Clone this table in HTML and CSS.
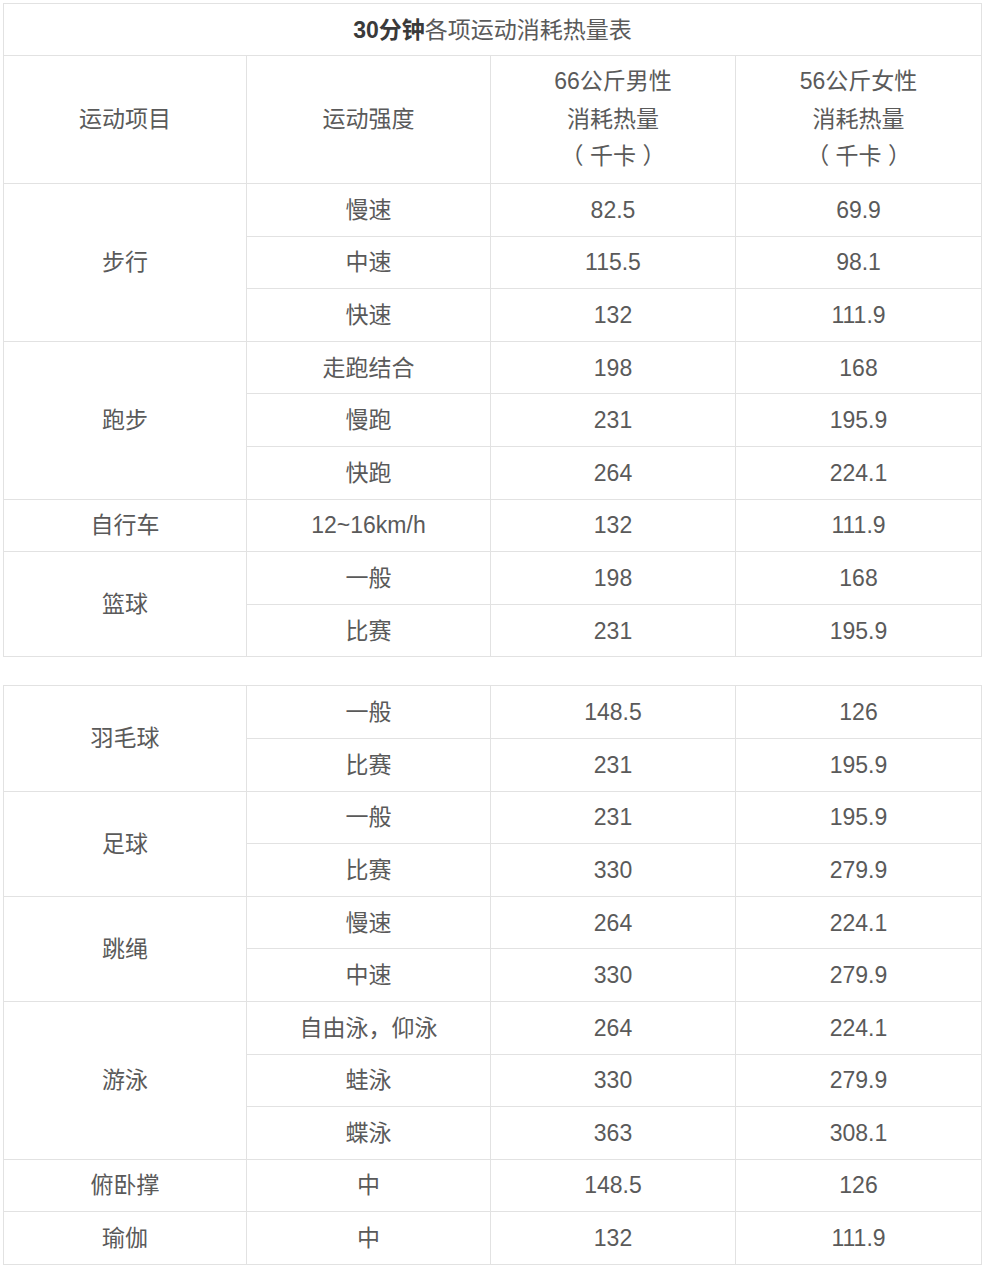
FILE: index.html
```html
<!DOCTYPE html>
<html lang="zh-CN">
<head>
<meta charset="utf-8">
<title>30分钟各项运动消耗热量表</title>
<link rel="stylesheet" href="styles.css">
</head>
<body>
<div class="page">
  <table class="cal">
    <colgroup><col class="c1"><col class="c2"><col class="c3"><col class="c4"></colgroup>
    <tr class="title-row"><td colspan="4"><b>30分钟</b>各项运动消耗热量表</td></tr>
    <tr class="head-row">
      <td>运动项目</td>
      <td>运动强度</td>
      <td>66公斤男性<br>消耗热量<br><span class="unit">（ 千卡 ）</span></td>
      <td>56公斤女性<br>消耗热量<br><span class="unit">（ 千卡 ）</span></td>
    </tr>
    <tr><td rowspan="3">步行</td><td>慢速</td><td>82.5</td><td>69.9</td></tr>
    <tr><td>中速</td><td>115.5</td><td>98.1</td></tr>
    <tr><td>快速</td><td>132</td><td>111.9</td></tr>
    <tr><td rowspan="3">跑步</td><td>走跑结合</td><td>198</td><td>168</td></tr>
    <tr><td>慢跑</td><td>231</td><td>195.9</td></tr>
    <tr><td>快跑</td><td>264</td><td>224.1</td></tr>
    <tr><td>自行车</td><td>12~16km/h</td><td>132</td><td>111.9</td></tr>
    <tr><td rowspan="2">篮球</td><td>一般</td><td>198</td><td>168</td></tr>
    <tr><td>比赛</td><td>231</td><td>195.9</td></tr>
  </table>

  <table class="cal second">
    <colgroup><col class="c1"><col class="c2"><col class="c3"><col class="c4"></colgroup>
    <tr><td rowspan="2">羽毛球</td><td>一般</td><td>148.5</td><td>126</td></tr>
    <tr><td>比赛</td><td>231</td><td>195.9</td></tr>
    <tr><td rowspan="2">足球</td><td>一般</td><td>231</td><td>195.9</td></tr>
    <tr><td>比赛</td><td>330</td><td>279.9</td></tr>
    <tr><td rowspan="2">跳绳</td><td>慢速</td><td>264</td><td>224.1</td></tr>
    <tr><td>中速</td><td>330</td><td>279.9</td></tr>
    <tr><td rowspan="3">游泳</td><td>自由泳，仰泳</td><td>264</td><td>224.1</td></tr>
    <tr><td>蛙泳</td><td>330</td><td>279.9</td></tr>
    <tr><td>蝶泳</td><td>363</td><td>308.1</td></tr>
    <tr><td>俯卧撑</td><td>中</td><td>148.5</td><td>126</td></tr>
    <tr><td>瑜伽</td><td>中</td><td>132</td><td>111.9</td></tr>
  </table>
</div>
</body>
</html>
```
FILE: styles.css
```css
html, body {
  margin: 0;
  padding: 0;
  background: #ffffff;
}

.page {
  padding: 3px 4px 0 3px;
  display: flex;
  flex-direction: column;
  gap: 28px;
}

.cal {
  width: 978px;
  border-collapse: collapse;
  table-layout: fixed;
  font-family: "Liberation Sans", "Noto Sans CJK SC", sans-serif;
  font-size: 23px;
  color: #5a5a5a;
}

.cal .c1 { width: 243px; }
.cal .c2 { width: 244px; }
.cal .c3 { width: 245px; }
.cal .c4 { width: 246px; }

.cal td {
  border: 1px solid #e2e2e2;
  text-align: center;
  vertical-align: middle;
  padding: 0;
  height: 51.6px;
  line-height: 30px;
}

.title-row td {
  height: 51px;
  color: #5a5a5a;
}

.title-row b {
  color: #3a3a3a;
  font-weight: 700;
}

.head-row td {
  height: 127px;
  line-height: 37.5px;
}

.unit {
  white-space: pre;
}
```
